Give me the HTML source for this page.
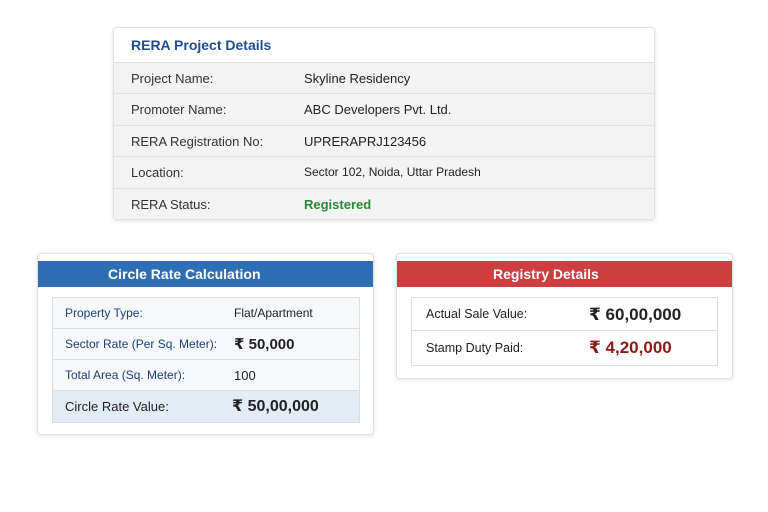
<!DOCTYPE html>
<html><head><meta charset="utf-8"><style>
*{margin:0;padding:0;box-sizing:border-box}
body{width:768px;height:512px;background:#fff;font-family:"Liberation Sans","DejaVu Sans",sans-serif;position:relative;overflow:hidden;color:#222}
.card{position:absolute;background:#fff;border:1px solid #e2e2e2;border-radius:4px;box-shadow:0 1px 4px rgba(0,0,0,.12)}
#top{left:113px;top:27px;width:542px;height:193px;overflow:hidden}
#top .h{height:35px;line-height:34px;padding-left:17px;color:#1f4e8f;font-weight:bold;font-size:14px;border-bottom:1px solid #ddd}
#top .r{height:31.4px;background:#f3f3f3;border-bottom:1px solid #e0e0e0;position:relative;font-size:13px;line-height:31px}
#top .r span{position:absolute}
#top .r .l{left:17px;color:#333}
#top .r .v{left:190px;color:#222}
.bar{position:absolute;left:0;right:0;top:7px;height:26px;color:#fff;font-weight:bold;font-size:14px;line-height:26px}
.tbl{position:absolute;border:1px solid #ddd}
.tr{position:relative;border-bottom:1px solid #ddd;font-size:12px}
.tr span{position:absolute;top:0}
</style></head><body>
<div class="card" id="top">
<div class="h">RERA Project Details</div>
<div class="r"><span class="l">Project Name:</span><span class="v">Skyline Residency</span></div>
<div class="r"><span class="l">Promoter Name:</span><span class="v">ABC Developers Pvt. Ltd.</span></div>
<div class="r"><span class="l">RERA Registration No:</span><span class="v">UPRERAPRJ123456</span></div>
<div class="r"><span class="l">Location:</span><span class="v" style="font-size:12px">Sector 102, Noida, Uttar Pradesh</span></div>
<div class="r" style="border:none"><span class="l">RERA Status:</span><span class="v" style="color:#2a8a3a;font-weight:bold">Registered</span></div>
</div>

<div class="card" style="left:37px;top:253px;width:337px;height:182px">
<div class="bar" style="background:#2f6db5;padding-left:70px">Circle Rate Calculation</div>
<div class="tbl" style="left:14px;top:43px;width:308px;height:126px;background:#f6f8fb">
<div class="tr" style="height:31px;line-height:31px"><span style="left:12px;color:#1f3f7a">Property Type:</span><span style="left:181px">Flat/Apartment</span></div>
<div class="tr" style="height:31px;line-height:31px"><span style="left:12px;color:#1f3f7a">Sector Rate (Per Sq. Meter):</span><span style="left:181px;font-size:15px;font-weight:bold">₹ 50,000</span></div>
<div class="tr" style="height:31px;line-height:31px"><span style="left:12px;color:#1f3f7a">Total Area (Sq. Meter):</span><span style="left:181px;font-size:13px">100</span></div>
<div class="tr" style="height:31px;line-height:31px;background:#e3ebf5;border:none"><span style="left:12px;font-size:13px">Circle Rate Value:</span><span style="left:179px;font-size:16px;font-weight:bold">₹ 50,00,000</span></div>
</div>
</div>

<div class="card" style="left:396px;top:253px;width:337px;height:126px">
<div class="bar" style="background:#cf3e3e;padding-left:96px">Registry Details</div>
<div class="tbl" style="left:14px;top:43px;width:307px;height:69px">
<div class="tr" style="height:33px;line-height:33px"><span style="left:14px;font-size:12.5px">Actual Sale Value:</span><span style="left:177px;font-size:17px;font-weight:bold">₹ 60,00,000</span></div>
<div class="tr" style="height:34px;line-height:34px;border:none"><span style="left:14px;font-size:12.5px">Stamp Duty Paid:</span><span style="left:177px;font-size:17px;font-weight:bold;color:#8e1a1a">₹ 4,20,000</span></div>
</div>
</div>
</body></html>
